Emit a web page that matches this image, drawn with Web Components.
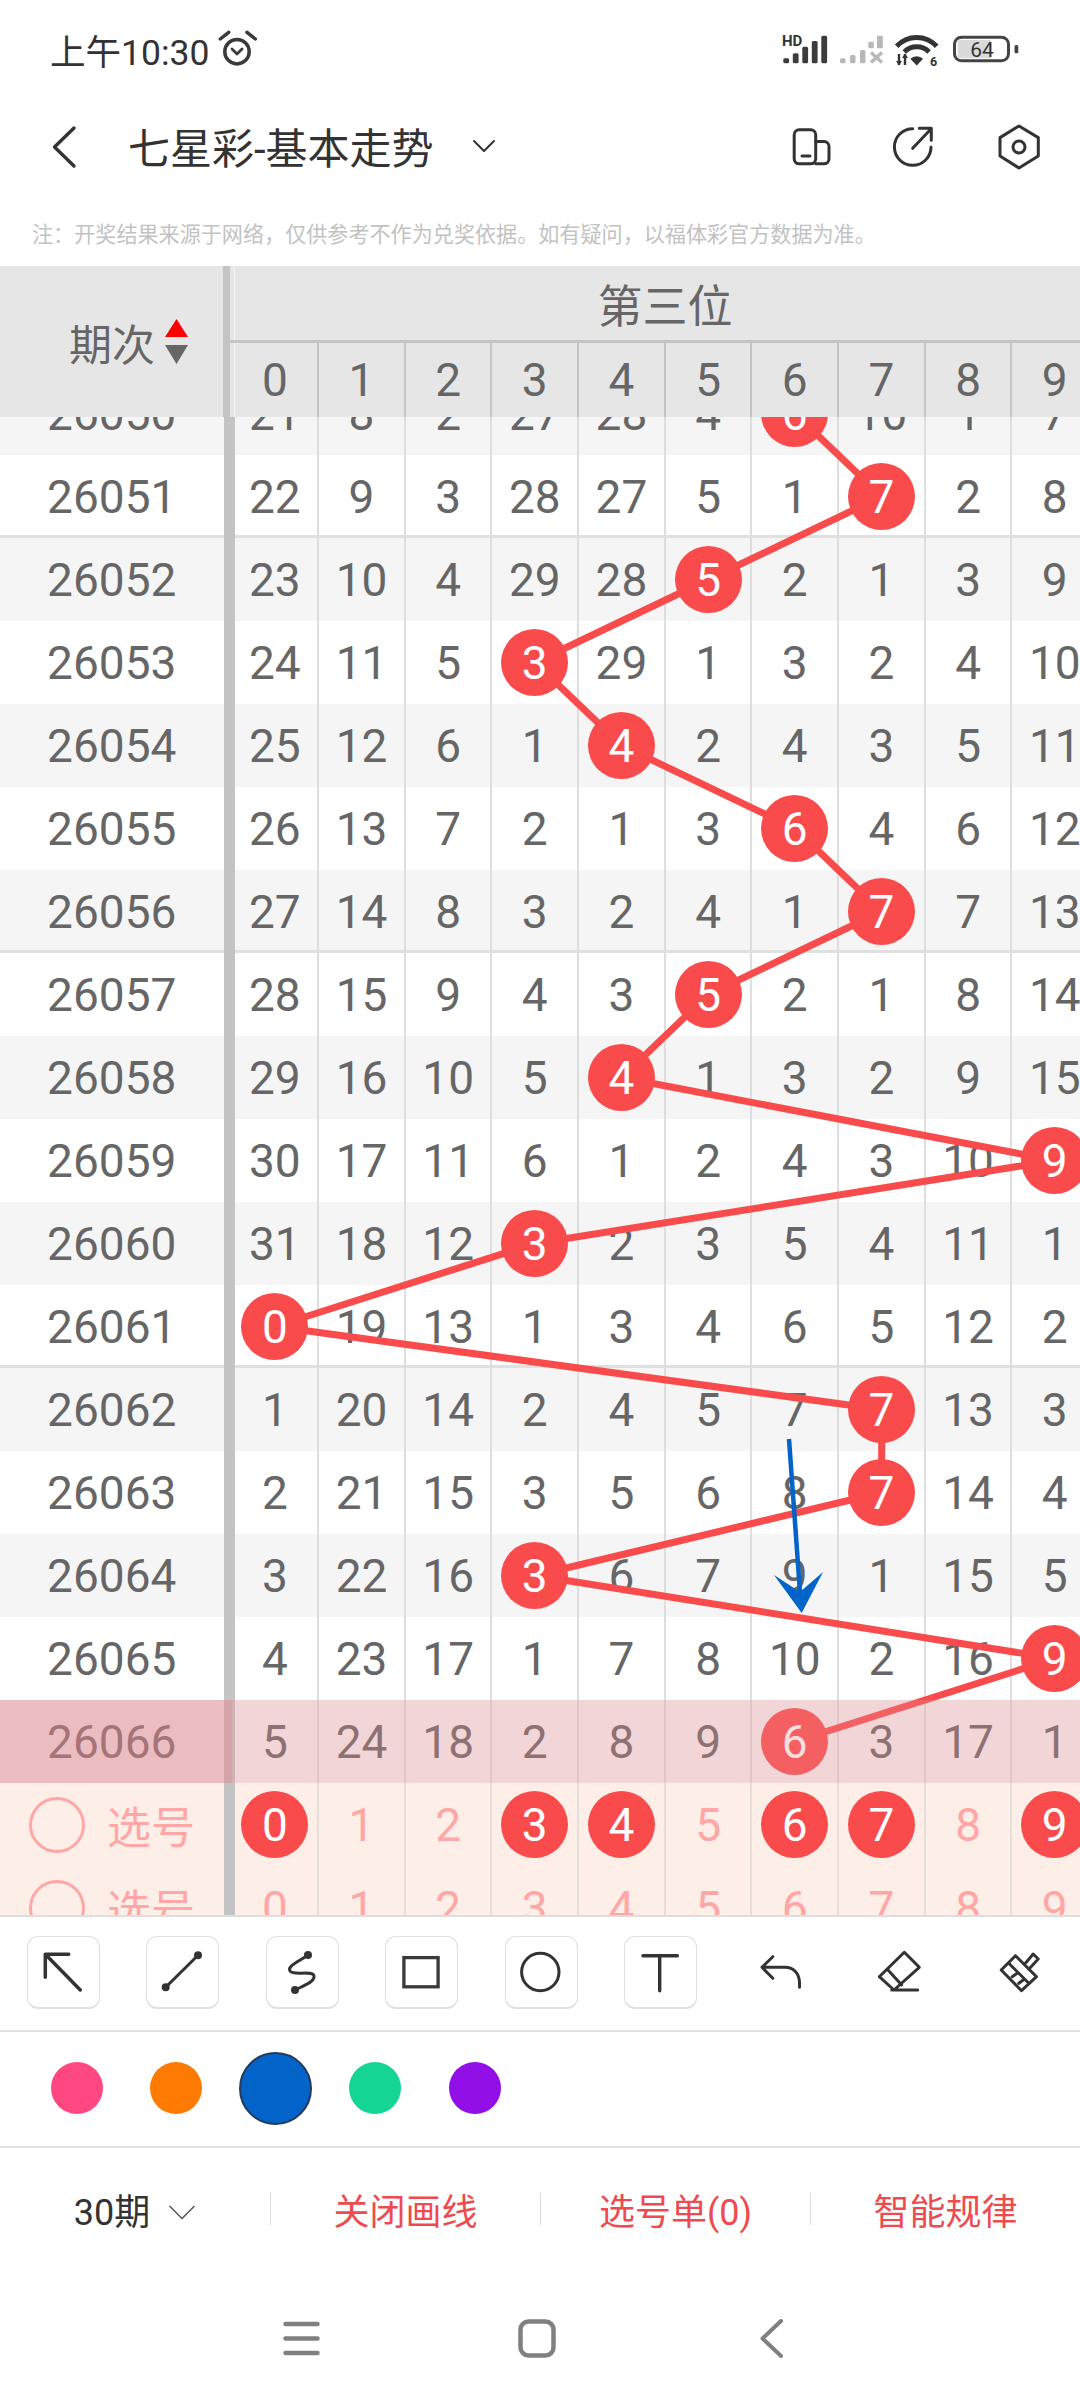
<!DOCTYPE html>
<html lang="zh-CN"><head><meta charset="utf-8"><title>七星彩-基本走势</title>
<style>
html,body{margin:0;padding:0;background:#fff}
body{width:1080px;height:2400px;overflow:hidden;font-family:Roboto,"Noto Sans CJK SC",sans-serif}
trend-app{width:1080px;height:2400px}
</style></head><body>
<trend-app></trend-app>
<script>
const FONT='Roboto,"Noto Sans CJK SC",sans-serif';
class Base extends HTMLElement{
  render(html){ if(!this.shadowRoot) this.attachShadow({mode:'open'}); this.shadowRoot.innerHTML=html; }
}
class StatusBar extends Base{connectedCallback(){this.render(`<style>
:host{display:flex;align-items:center;height:98px;padding:0 60px 0 50px;box-sizing:border-box;color:#333;font:35.500px ${FONT}}
.t{white-space:nowrap}svg{display:block;flex:none}.a{margin-left:8px}.r{margin-left:auto;margin-top:2px}
text{font-family:Roboto,sans-serif}
</style><span class="t">上午10:30</span>
<svg class="a" width="40" height="40" viewBox="0 0 40 40" fill="none" stroke="#3a3a3a" stroke-linecap="round" stroke-linejoin="round"><circle cx="20" cy="22.7" r="12.2" stroke-width="3.5"/><path d="M3.3 10 11.7 3.3M30 3.3 38.3 10" stroke-width="3.5"/><path d="M15 20l5 5 5-5" stroke-width="2.8"/></svg>
<svg class="r" width="240" height="40" viewBox="0 0 240 40">
<text x="2" y="16" font-size="15" font-weight="700" fill="#333">HD</text>
<g fill="#3c3c3c"><rect x="3.3" y="28.3" width="5.8" height="5" rx="1.5"/><rect x="12.8" y="23.3" width="5.8" height="10" rx="1.5"/><rect x="22.3" y="16.7" width="5.8" height="16.6" rx="1.5"/><rect x="31.8" y="11" width="5.8" height="22.3" rx="1.5"/><rect x="41.3" y="5.7" width="5.8" height="27.6" rx="1.5"/></g>
<g fill="#b8b8b8"><rect x="60" y="28.3" width="5.5" height="5" rx="1.5"/><rect x="70" y="25" width="5.5" height="8.3" rx="1.5"/><rect x="80" y="20" width="5.5" height="13.3" rx="1.5"/><rect x="88.3" y="11.7" width="5.5" height="6.6" rx="1"/><rect x="97" y="5.7" width="5.8" height="12.6" rx="1"/></g>
<path d="M91 22.5 102 32.5M102 22.5 91 32.5" stroke="#b8b8b8" stroke-width="3.4"/>
<g fill="none" stroke="#333" stroke-width="5"><path d="M116.7 16.3A27 27 0 0 1 156.7 16.3"/><path d="M124.3 21.9A17.5 17.5 0 0 1 149.1 21.9"/></g>
<path d="M136.7 35.5 130.3 28.8A9 9 0 0 1 143.1 28.8Z" fill="#333"/>
<path d="M119 24V35M125 24V35" stroke="#333" stroke-width="2.4"/><path d="M116 31l3 4.5 3-4.5zM122 28l3-4.5 3 4.5z" fill="#333"/>
<text x="150" y="35.7" font-size="12.5" font-weight="700" fill="#333">6</text>
<rect x="177.7" y="10" width="34" height="18.3" rx="2.5" fill="#dadada"/>
<rect x="174.5" y="7.2" width="54" height="23.6" rx="7" fill="none" stroke="#444" stroke-width="3"/>
<text x="202" y="26.7" font-size="21" text-anchor="middle" fill="#333">64</text>
<rect x="234.5" y="15" width="3.8" height="8.3" rx="1.5" fill="#444"/>
</svg>`)}}
class NavBar extends Base{connectedCallback(){this.render(`<style>
:host{display:flex;align-items:center;height:98px;color:#333}
svg{display:block;flex:none;fill:none;stroke:#333;stroke-linecap:round;stroke-linejoin:round}
.b{margin-left:50px}.t{margin-left:50px;margin-top:-3px;font:42px ${FONT};white-space:nowrap;width:307px}
.c{margin-left:36px;margin-top:-2px}.i{stroke-width:3}.i1{margin-left:auto}.i2{margin-left:53px}.i3{margin-left:58px;margin-right:37px}
</style>
<svg class="b" width="28" height="44" viewBox="0 0 28 44" stroke-width="3.4"><path d="M24 3 4.5 22 24 41"/></svg>
<span class="t">七星彩-基本走势</span>
<svg class="c" width="26" height="16" viewBox="0 0 26 16" stroke-width="2"><path d="M3 3l10 10L23 3"/></svg>
<svg class="i i1" width="48" height="48" viewBox="0 0 48 48"><rect x="6.2" y="6.8" width="21.5" height="34" rx="5"/><path d="M27.7 18.5h8.3a5 5 0 0 1 5 5v12.300a5 5 0 0 1-5 5h-8.300"/><path d="M14 33h8"/></svg>
<svg class="i i2" width="48" height="48" viewBox="0 0 48 48"><path d="M23.700 5.700A18.300 18.300 0 1 0 42 24"/><path d="M23.700 25.300 41.700 6.300M30.300 5.300H42.300V17.300"/></svg>
<svg class="i i3" width="48" height="48" viewBox="0 0 48 48"><path d="M24 3 43.300 14.600V33L24 45 5 33V14.600Z"/><circle cx="24" cy="24" r="6"/></svg>`)}}
class NoteLine extends Base{connectedCallback(){this.render(`<style>
:host{display:block;height:70px;box-sizing:border-box;padding:24px 0 0 32px;color:#c2c2c2;font:21.100px/30px ${FONT};white-space:nowrap}
</style><slot></slot>`)}}
class TrendRow extends Base{connectedCallback(){
  const vals=this.getAttribute('vals').split(' ');
  const balls=(this.getAttribute('ball')||'').split(' ').filter(Boolean);
  const sel=this.hasAttribute('select');
  const cells=vals.map((v,i)=>`<div class="c n${i==0?' f':''}">${balls.includes(String(i))?`<span class="ball">${i}</span>`:v}</div>`).join('');
  const label=sel?`<span class="o"></span><span class="s">选号</span>`:this.getAttribute('no');
  this.render(`<style>
:host{display:grid;grid-template-columns:231.5px repeat(10,86.67px);height:83px;position:relative;background:#fff;color:#666;font:46px ${FONT}}
:host([alt]){background:#f5f5f5}
:host([select]){background:#feeee8;color:#ffa6a6}
.c{display:flex;align-items:center;justify-content:center;box-sizing:border-box;min-width:0}
.n{border:solid #dedede;border-width:0 1.5px}
.f{border-left:3.5px solid #c4c4c4;padding-right:2px}
.l{border-right:8.5px solid #c4c4c4;position:relative;gap:13px}
:host([line]) .c{box-shadow:inset 0 -3px #e0e0e0}
:host([select]) .n{border-color:#e6dedb}:host([select]) .f{border-left-color:#c4c4c4}
:host([select]) .l{justify-content:flex-start;padding-left:29px}
.ball{position:relative;z-index:2;width:67px;height:67px;border-radius:50%;background:#f94b4b;color:#fff;display:flex;align-items:center;justify-content:center;flex:none}
.o{width:50px;height:50px;border:3px solid #ffa6a6;border-radius:50%;flex:none;margin-right:9px}
.s{white-space:nowrap;font-size:44px}
:host([current])::after{content:"";position:absolute;inset:0;z-index:3;background:rgba(232,140,147,.306);pointer-events:none}
:host([current]) .l::after{content:"";position:absolute;left:0;top:0;bottom:0;right:-8.5px;z-index:3;background:rgba(220,120,125,.27)}
</style><div class="c l">${label}</div>${cells}`);
}}
class TrendTable extends Base{connectedCallback(){
  const rows=[...this.querySelectorAll('trend-row[no]')];
  const pts=rows.map((r,i)=>[275+86.67*Number(r.getAttribute('ball')),41.500+83*i]);
  const d='M'+pts.map(p=>p[0].toFixed(1)+' '+p[1].toFixed(1)).join('L');
  const A=(x,y)=>`${x} ${y-372}`;
  const digits=[0,1,2,3,4,5,6,7,8,9].map(n=>`<div class="h${n==0?' h0':''}">${n}</div>`).join('');
  this.render(`<style>
:host{display:flex;flex-direction:column;height:1651px;box-sizing:border-box;border-bottom:2px solid #ddd;width:1080px;overflow:hidden}
.head{display:flex;flex:none;height:151px;background:#e6e6e6;color:#666;position:relative;z-index:5;overflow:hidden}
.left{flex:none;width:230px;box-sizing:border-box;border-right:7px solid #c4c4c4;display:flex;align-items:center;padding-left:69px;font:43px ${FONT};white-space:nowrap}
.left svg{display:block;margin-left:10px;flex:none}
.right{flex:none;width:870px;background:linear-gradient(90deg,#e6e6e6 4px,#f7f7f7 4px,#f7f7f7 5px,#e6e6e6 5px)}
.pos{height:74px;box-sizing:border-box;display:flex;align-items:center;justify-content:center;font:45px ${FONT}}
.bar{height:3px;background:#c4c4c4}
.digs{display:grid;grid-template-columns:repeat(10,86.67px);margin-left:1.5px;height:74px;font:46px ${FONT}}
.h{display:flex;align-items:center;justify-content:center;box-sizing:border-box;border:solid #c4c4c4;border-width:0 1.5px}
.h0{border-left-color:transparent}
.body{flex:1;min-height:0;overflow:hidden}
.inner{position:relative;margin-top:-45px}
svg.ov{position:absolute;left:0;top:0;z-index:1;pointer-events:none}
svg.ar{position:absolute;left:0;top:0;z-index:4;pointer-events:none}
</style>
<div class="head"><div class="left">期次<svg width="23" height="46" viewBox="0 0 23 46"><path d="M11.5 0 23 18H0Z" fill="#f00"/><path d="M0 26H23L11.5 45Z" fill="#666"/></svg></div>
<div class="right"><div class="pos">第三位</div><div class="bar"></div><div class="digs">${digits}</div></div></div>
<div class="body"><div class="inner"><slot></slot>
<svg class="ov" width="1080" height="1500" viewBox="0 0 1080 1500"><path d="${d}" fill="none" stroke="#f94b4b" stroke-width="7" stroke-linejoin="round"/></svg>
<svg class="ar" width="1080" height="1500" viewBox="0 0 1080 1500"><path d="M${A(789,1439)}L${A(800,1592)}" stroke="#0264c8" stroke-width="4.500" fill="none"/><path d="M${A(801.7,1613)}L${A(774,1575)}L${A(800,1592)}L${A(823,1572)}Z" fill="#0264c8"/></svg>
</div></div>`);
}}
class ToolBtn extends Base{connectedCallback(){this.render(`<style>
:host{display:block;width:73px;height:73px;box-sizing:border-box;justify-self:center}
:host([boxed]){border:1.5px solid #e0e0e0;border-bottom-width:2px;border-radius:11px}
::slotted(svg){display:block;margin:0}
.w{display:block;width:73px;height:73px;margin:0}
:host([boxed]) .w{margin:-1.5px}
</style><div class="w"><slot></slot></div>`)}}
class DrawTools extends Base{connectedCallback(){this.render(`<style>
:host{display:grid;grid-template-columns:repeat(9,119.5px);padding:19px 0 0 3.5px;height:115px;box-sizing:border-box;border-bottom:2px solid #e2e2e2}
</style><slot></slot>`)}}
class ColorDot extends Base{connectedCallback(){this.render(`<style>
:host{display:flex;align-items:center;justify-content:center;width:99.5px}
i{display:block;width:52px;height:52px;border-radius:50%;background:${this.getAttribute('color')};box-sizing:border-box}
:host([selected]) i{width:73px;height:73px;border:2px solid #263a5a}
</style><i></i>`)}}
class ColorRow extends Base{connectedCallback(){this.render(`<style>
:host{display:flex;align-items:center;height:116px;box-sizing:border-box;padding:0 0 2px 27px;border-bottom:2px solid #e2e2e2}
</style><slot></slot>`)}}
class BottomBar extends Base{connectedCallback(){this.render(`<style>
:host{display:grid;grid-template-columns:repeat(4,270px);height:122px;align-items:center;font:36px ${FONT};color:#ee4a4f}
</style><slot></slot>`)}}
class BarItem extends Base{connectedCallback(){this.render(`<style>
:host{display:flex;align-items:center;justify-content:center;height:32px;box-sizing:border-box;white-space:nowrap}
:host([sep]){border-left:1.5px solid #dcdcdc}
:host([period]){color:#333}
::slotted(svg){display:block;margin-left:18px;margin-top:6px}
</style><slot></slot>`)}}
class GestureBar extends Base{connectedCallback(){this.render(`<style>
:host{display:flex;align-items:center;height:130px;box-sizing:border-box;padding:6px 0 0 283px}
svg{display:block;flex:none;fill:none;stroke:#808080;stroke-linecap:round;stroke-linejoin:round}
.h{margin-left:198px}.b{margin-left:204px}
</style>
<svg width="37" height="35" viewBox="0 0 37 35" stroke-width="4.500"><path d="M2.500 3H34.500M2.500 17.500H34.500M2.500 32H34.500"/></svg>
<svg class="h" width="38" height="39" viewBox="0 0 38 39" stroke-width="4.500"><rect x="2.500" y="2.500" width="33" height="34" rx="8"/></svg>
<svg class="b" width="23" height="39" viewBox="0 0 23 39" stroke-width="4"><path d="M21 2 2.500 19.500 21 37"/></svg>`)}}
class TrendApp extends Base{connectedCallback(){
const data=[
['26050','21 8 2 27 28 4 6 10 1 7',6],['26051','22 9 3 28 27 5 1 7 2 8',7],['26052','23 10 4 29 28 5 2 1 3 9',5],
['26053','24 11 5 3 29 1 3 2 4 10',3],['26054','25 12 6 1 4 2 4 3 5 11',4],['26055','26 13 7 2 1 3 6 4 6 12',6],
['26056','27 14 8 3 2 4 1 7 7 13',7],['26057','28 15 9 4 3 5 2 1 8 14',5],['26058','29 16 10 5 4 1 3 2 9 15',4],
['26059','30 17 11 6 1 2 4 3 10 9',9],['26060','31 18 12 3 2 3 5 4 11 1',3],['26061','0 19 13 1 3 4 6 5 12 2',0],
['26062','1 20 14 2 4 5 7 7 13 3',7],['26063','2 21 15 3 5 6 8 7 14 4',7],['26064','3 22 16 3 6 7 9 1 15 5',3],
['26065','4 23 17 1 7 8 10 2 16 9',9],['26066','5 24 18 2 8 9 6 3 17 1',6]];
const rows=data.map((r,i)=>{const n=Number(r[0]);return `<trend-row no="${r[0]}" vals="${r[1]}" ball="${r[2]}"${n%2==0?' alt':''}${n%5==1&&n<26066?' line':''}${n==26066?' current':''}></trend-row>`}).join('');
const S='fill="none" stroke="#333" stroke-linecap="round" stroke-linejoin="round"';
this.render(`<style>:host{display:flex;flex-direction:column;width:1080px;height:2400px;background:#fff}</style>
<status-bar></status-bar><nav-bar></nav-bar>
<note-line>注：开奖结果来源于网络，仅供参考不作为兑奖依据。如有疑问，以福体彩官方数据为准。</note-line>
<trend-table>${rows}
<trend-row select vals="0 1 2 3 4 5 6 7 8 9" ball="0 3 4 6 7 9"></trend-row>
<trend-row select vals="0 1 2 3 4 5 6 7 8 9"></trend-row></trend-table>
<draw-tools>
<tool-btn boxed><svg width="73" height="73" viewBox="0 0 73 73" ${S} stroke-width="3.500"><path d="M42.700 18.300H19.300V41.300M19.300 18.300 54.300 54"/></svg></tool-btn>
<tool-btn boxed><svg width="73" height="73" viewBox="0 0 73 73" ${S} stroke-width="3"><path d="M52 19.300 19.700 51.300"/><circle cx="52" cy="19.300" r="2.500" fill="#333"/><circle cx="19.700" cy="51.300" r="2.500" fill="#333"/></svg></tool-btn>
<tool-btn boxed><svg width="73" height="73" viewBox="0 0 73 73" ${S} stroke-width="3"><path d="M43 19C33 26 22 30 25 35 28 40 48 34 49 40 50 46 38 50 30 54"/><circle cx="43" cy="19" r="2.500" fill="#333"/><circle cx="30" cy="54" r="2.500" fill="#333"/></svg></tool-btn>
<tool-btn boxed><svg width="73" height="73" viewBox="0 0 73 73" fill="none" stroke="#3a3a3a" stroke-width="3.300"><rect x="18.900" y="21.600" width="34.200" height="29.200"/></svg></tool-btn>
<tool-btn boxed><svg width="73" height="73" viewBox="0 0 73 73" ${S} stroke-width="3"><circle cx="36.300" cy="36" r="18.700"/></svg></tool-btn>
<tool-btn boxed><svg width="73" height="73" viewBox="0 0 73 73" ${S} stroke-width="3.400"><path d="M19 19.700H53.400M35.700 19.700V54.700"/></svg></tool-btn>
<tool-btn><svg width="73" height="73" viewBox="0 0 73 73" ${S} stroke-width="3"><path d="M28.800 20.700 18 31.300 28.800 42.300M18 31.300H41C50 31.300 55.500 38 55.500 47V51.300"/></svg></tool-btn>
<tool-btn><svg width="73" height="73" viewBox="0 0 73 73" ${S} stroke-width="3"><path d="M41.300 16.300 56.300 31.300 31 54 16.300 40.700ZM24.300 33.300 38.700 49M28.700 54H54.700"/></svg></tool-btn>
<tool-btn><svg width="73" height="73" viewBox="0 0 73 73" ${S} stroke-width="3"><path d="M32.500 19.700 53.500 40.700 38.500 54.700 18.200 34ZM41.800 28 50.200 18 55.200 23 45.800 33.300M25.800 27.300 45.800 47.300M29.200 40.700 34.200 37.300M35.800 47.300 40.200 44"/></svg></tool-btn>
</draw-tools>
<color-row><color-dot color="#ff4782"></color-dot><color-dot color="#ff7a00"></color-dot><color-dot color="#0264c8" selected></color-dot><color-dot color="#14d594"></color-dot><color-dot color="#930fe8"></color-dot></color-row>
<bottom-bar><bar-item period>30期<svg width="28" height="16" viewBox="0 0 28 16" fill="none" stroke="#555" stroke-width="1.500"><path d="M1.500 2 14 14.500 26.500 2"/></svg></bar-item><bar-item sep>关闭画线</bar-item><bar-item sep>选号单(0)</bar-item><bar-item sep>智能规律</bar-item></bottom-bar>
<gesture-bar></gesture-bar>`);
}}
customElements.define('status-bar',StatusBar);customElements.define('nav-bar',NavBar);customElements.define('note-line',NoteLine);
customElements.define('trend-row',TrendRow);customElements.define('trend-table',TrendTable);customElements.define('tool-btn',ToolBtn);
customElements.define('draw-tools',DrawTools);customElements.define('color-dot',ColorDot);customElements.define('color-row',ColorRow);
customElements.define('bottom-bar',BottomBar);customElements.define('bar-item',BarItem);customElements.define('gesture-bar',GestureBar);
customElements.define('trend-app',TrendApp);
</script></body></html>
